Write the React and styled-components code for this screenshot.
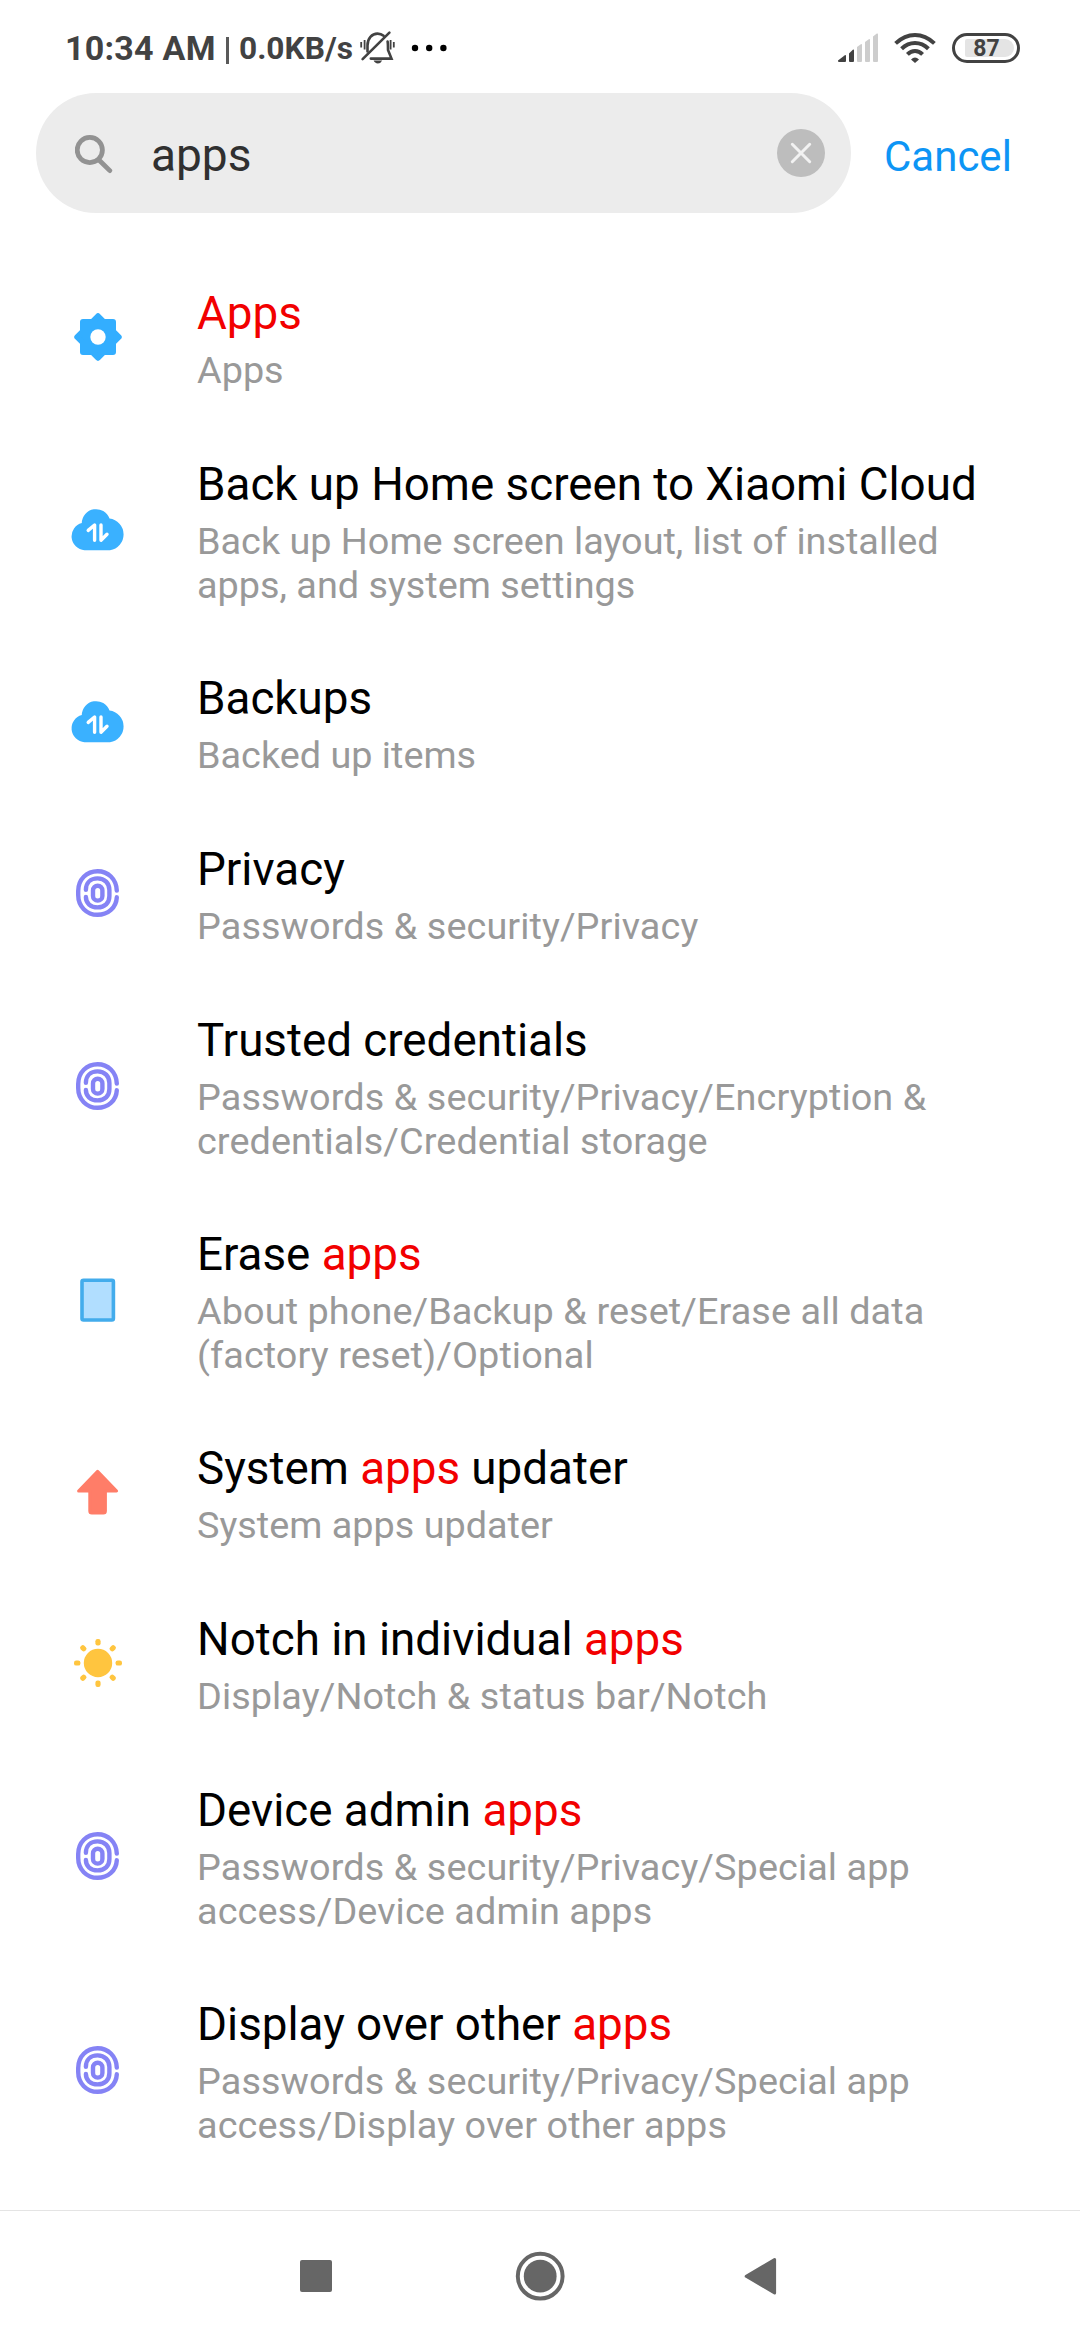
import React from "react";
import styled, { createGlobalStyle } from "styled-components";

const results = [
  { icon: "gear", title: "Apps", path: "Apps" },
  {
    icon: "cloud",
    title: "Back up Home screen to Xiaomi Cloud",
    path: "Back up Home screen layout, list of installed apps, and system settings",
  },
  { icon: "cloud", title: "Backups", path: "Backed up items" },
  { icon: "finger", title: "Privacy", path: "Passwords & security/Privacy" },
  {
    icon: "finger",
    title: "Trusted credentials",
    path: "Passwords & security/Privacy/Encryption & credentials/Credential storage",
  },
  {
    icon: "tablet",
    title: "Erase apps",
    path: "About phone/Backup & reset/Erase all data (factory reset)/Optional",
  },
  { icon: "arrow", title: "System apps updater", path: "System apps updater" },
  { icon: "sun", title: "Notch in individual apps", path: "Display/Notch & status bar/Notch" },
  {
    icon: "finger",
    title: "Device admin apps",
    path: "Passwords & security/Privacy/Special app access/Device admin apps",
  },
  {
    icon: "finger",
    title: "Display over other apps",
    path: "Passwords & security/Privacy/Special app access/Display over other apps",
  },
];

// all row icons share a 60x60 box centred on 30,30
const icons = {
  gear: (
    <>
      <g fill="#33aeff" stroke="#33aeff" strokeWidth="6" strokeLinejoin="round">
        <rect x="15" y="15" width="30" height="30" />
        <path d="M30 9.3 50.7 30 30 50.7 9.3 30Z" />
      </g>
      <circle cx="30" cy="30" r="7.7" fill="#fff" />
    </>
  ),
  cloud: (
    <>
      <path
        d="M16.5 50.2A13.8 13.8 0 0 1 13.8 23.1A14.3 14.3 0 0 1 41.5 18.5A16 16 0 0 1 42 50.2Z"
        fill="#3ab1ff"
      />
      <path
        d="M20.2 30.4 26.6 25v15.3M33 25v15.3l6-6"
        fill="none"
        stroke="#fff"
        strokeWidth="3.4"
        strokeLinecap="round"
        strokeLinejoin="round"
      />
    </>
  ),
  finger: (
    <g fill="none" stroke="#8583f5" strokeWidth="4.4" strokeLinecap="round">
      <path d="M48.8 27.6C48.3 16 40 8.2 29.6 8.2C18.6 8.2 10.2 16.6 10.2 28v4C10.2 43.4 18.6 51.8 29.6 51.8C40 51.8 48.3 44.5 48.8 34.3" />
      <path d="M17.9 26.8C17.9 19.8 22.6 15.4 29.6 15.4S41.4 20 41.4 27v6C41.4 40 36.6 44.4 29.6 44.4S17.9 40.2 17.9 34" />
      <rect x="25" y="22.8" width="9.4" height="14.8" rx="4.7" />
    </g>
  ),
  tablet: (
    <rect x="14" y="10.2" width="31.4" height="39.8" rx="1.5" fill="#b1deff" stroke="#43acec" strokeWidth="3.6" />
  ),
  arrow: (
    <path
      d="M29.6 9.3 48.6 29H37.4V49Q37.4 51 35.4 51H23.8Q21.8 51 21.8 49V29H10.6Z"
      fill="#ff7d68"
      stroke="#ff7d68"
      strokeWidth="3"
      strokeLinejoin="round"
    />
  ),
  sun: (
    <>
      <circle cx="30" cy="30" r="14.2" fill="#ffc53f" />
      {[0, 45, 90, 135, 180, 225, 270, 315].map((deg) => (
        <rect key={deg} x="27.4" y="6" width="5.2" height="6.4" rx="2.2" fill="#ffc53f" transform={`rotate(${deg} 30 30)`} />
      ))}
    </>
  ),
};

function StatusBar() {
  return (
    <Status>
      <Clock>10:34 AM</Clock>
      <Divider />
      <Speed>0.0KB/s</Speed>
      <BellIcon viewBox="0 0 36 36" fill="none" stroke="#424242" strokeWidth="2.6" strokeLinecap="round">
        <path d="M7.5 21.5V15.5C7.5 8.5 12 3.6 17.5 3.6C20 3.6 22 4.4 23.6 5.8M27.6 11.5C28 13.5 28 15 28 20L31.5 28.6H10.8" />
        <path d="M2.6 29.2 29.4 2.6" />
        <path d="M13.6 30.6H22.2Q21 33.4 17.9 33.4T13.6 30.6Z" fill="#424242" stroke="none" />
        <path d="M1.2 12v5.6M4.6 10v9.6M30.6 10v9.6M33.8 12v5.6" strokeWidth="1.8" strokeLinecap="butt" />
      </BellIcon>
      <DotsIcon viewBox="0 0 36 8">
        <circle cx="4" cy="4" r="3.2" />
        <circle cx="18.2" cy="4" r="3.2" />
        <circle cx="32.4" cy="4" r="3.2" />
      </DotsIcon>
      <StatusRight>
        <svg width="40" height="30" viewBox="0 0 40 30">
          <path d="M0 27.4 6.5 22.4Q8 21.6 8 23V28Q8 29 7 29H1Q0 29 0 28Z" fill="#424242" />
          <path d="M11 20.5 14.8 16.8Q16 16 16 17.4V28Q16 29 15 29H12Q11 29 11 28Z" fill="#424242" />
          <g fill="#cdcdcd">
            <path d="M19 14 22.8 11.2Q24 10.6 24 12V28Q24 29 23 29H20Q19 29 19 28Z" />
            <path d="M27 9 30.8 6.2Q32 5.6 32 7V28Q32 29 31 29H28Q27 29 27 28Z" />
            <path d="M35 3.6 38.8.6Q40 0 40 1.4V28Q40 29 39 29H36Q35 29 35 28Z" />
          </g>
        </svg>
        <WifiIcon viewBox="0 0 42 30" fill="none" stroke="#424242" strokeWidth="4">
          <path d="M1.6 10.4Q10.5 2 21 2T40.4 10.4" />
          <path d="M7.6 15.8Q13.5 10 21 10T34.4 15.8" />
          <path d="M13.4 21.4Q16.8 18 21 18T28.6 21.4" />
          <path d="M17 26.4Q21 22.6 25 26.4L21 30Z" fill="#424242" stroke="none" />
        </WifiIcon>
        <Battery>
          <BatteryLevel>87</BatteryLevel>
        </Battery>
      </StatusRight>
    </Status>
  );
}

// paint every lower/upper case match of the query in red
function Highlight({ text, query }) {
  return text
    .split(new RegExp(`\\b(${query})\\b`, "i"))
    .map((part, i) => (part.toLowerCase() === query ? <Match key={i}>{part}</Match> : part));
}

export default function App() {
  const query = "apps";

  return (
    <Screen>
      <GlobalStyle />
      <StatusBar />
      <SearchRow>
        <SearchBox>
          <SearchIcon viewBox="0 0 38 40" fill="none" stroke="#929292" strokeWidth="4.8" strokeLinecap="round">
            <circle cx="14.8" cy="16" r="12.6" />
            <path d="M24.5 26.5 34.8 36.6" />
          </SearchIcon>
          <Query>{query}</Query>
          <ClearButton aria-label="Clear">
            <svg width="48" height="48" viewBox="0 0 48 48">
              <path d="M15.3 15.3 32.7 32.7M32.7 15.3 15.3 32.7" stroke="#f2f2f2" strokeWidth="3" strokeLinecap="round" />
            </svg>
          </ClearButton>
        </SearchBox>
        <Cancel>Cancel</Cancel>
      </SearchRow>
      <List>
        {results.map((item) => (
          <Row key={item.title}>
            <RowIcon viewBox="0 0 60 60">{icons[item.icon]}</RowIcon>
            <RowText>
              <Title>
                <Highlight text={item.title} query={query} />
              </Title>
              <Path $nested={item.path.includes("/")}>{item.path}</Path>
            </RowText>
          </Row>
        ))}
      </List>
      <NavBar>
        <NavIcon viewBox="0 0 50 50">
          <rect x="9" y="9" width="32" height="32" rx="2" />
        </NavIcon>
        <NavIcon viewBox="0 0 50 50">
          <circle cx="25.2" cy="25.2" r="22.4" fill="none" stroke="#666" strokeWidth="4" />
          <circle cx="25.2" cy="25.2" r="16.4" />
        </NavIcon>
        <NavIcon viewBox="0 0 50 50">
          <path d="M7.2 25.3 35.6 8.6V42Z" stroke="#666" strokeWidth="3" strokeLinejoin="round" />
        </NavIcon>
      </NavBar>
    </Screen>
  );
}

const GlobalStyle = createGlobalStyle`
  body {
    margin: 0;
    background: #fff;
  }
  * {
    box-sizing: border-box;
  }
  svg {
    display: block;
    flex-shrink: 0;
  }
`;

const Screen = styled.div`
  width: 1080px;
  height: 2340px;
  display: flex;
  flex-direction: column;
  overflow: hidden;
  background: #fff;
  font-family: Roboto, "Liberation Sans", sans-serif;
`;

const Status = styled.header`
  height: 93px;
  padding: 3px 60px 0 65px;
  display: flex;
  align-items: center;
  color: #424242;
  white-space: nowrap;
`;

const Clock = styled.span`
  width: 150px;
  font-size: 34px;
  font-weight: 700;
  line-height: 40px;
  letter-spacing: 0.25px;
`;

const Divider = styled.span`
  width: 3px;
  height: 27px;
  margin: 5px 10px 0 11px;
  background: #5a5a5a;
`;

const Speed = styled.span`
  width: 121px;
  padding-top: 1px;
  font-size: 31.7px;
  font-weight: 700;
  line-height: 39px;
`;

const BellIcon = styled.svg`
  width: 36px;
  height: 36px;
`;

const DotsIcon = styled.svg`
  width: 36px;
  height: 8px;
  margin-left: 15px;
`;

const StatusRight = styled.div`
  margin-left: auto;
  display: flex;
  align-items: center;
`;

const WifiIcon = styled.svg`
  width: 42px;
  height: 30px;
  margin: 0 16px;
`;

const Battery = styled.div`
  width: 68px;
  height: 30px;
  padding: 3px 3px 3px 10px;
  border: 3px solid #424242;
  border-radius: 15px;
`;

const BatteryLevel = styled.div`
  width: 49px;
  height: 18px;
  padding-right: 6px;
  border-radius: 2px 9px 9px 2px;
  background: #e4e4e4;
  font-size: 23px;
  font-weight: 700;
  line-height: 20px;
  text-align: center;
`;

const SearchRow = styled.div`
  height: 120px;
  padding-left: 36px;
  display: flex;
  align-items: center;
`;

const SearchBox = styled.div`
  width: 815px;
  height: 120px;
  padding: 0 26px 0 39px;
  display: flex;
  align-items: center;
  border-radius: 60px;
  background: #ececec;
`;

const SearchIcon = styled.svg`
  width: 38px;
  height: 40px;
  margin-top: 2px;
`;

const Query = styled.span`
  flex: 1;
  margin-left: 38px;
  padding-top: 3px;
  color: #303030;
  font-size: 46px;
  line-height: 54px;
`;

const ClearButton = styled.button`
  width: 48px;
  height: 48px;
  padding: 0;
  border: none;
  border-radius: 50%;
  background: #bdbdbd;
`;

const Cancel = styled.span`
  margin-left: 33px;
  padding-top: 7px;
  color: #0d95f5;
  font-size: 42px;
  line-height: 50px;
`;

const List = styled.main`
  flex: 1;
  padding-top: 40px;
`;

const Row = styled.div`
  min-height: 171px;
  padding: 33px 84px 31px 68px;
  display: flex;
  align-items: center;
`;

const RowIcon = styled.svg`
  width: 60px;
  height: 60px;
  margin-bottom: 5px;
`;

const RowText = styled.div`
  flex: 1;
  align-self: flex-start;
  margin-left: 69px;
`;

const Title = styled.div`
  padding-top: 1px;
  color: #000;
  font-size: 45.75px;
  line-height: 54px;
  white-space: nowrap;
`;

const Match = styled.span`
  color: #f20000;
`;

const Path = styled.div`
  margin-top: 7px;
  color: #999;
  font-size: 37.8px;
  line-height: 44px;
  letter-spacing: ${({ $nested }) => ($nested ? "0.09px" : "normal")};
`;

const NavBar = styled.footer`
  height: 130px;
  padding: 1px 291px 0;
  display: flex;
  align-items: center;
  justify-content: space-between;
  border-top: 1px solid #e4e4e4;
`;

const NavIcon = styled.svg`
  width: 50px;
  height: 50px;
  fill: #666;
`;
